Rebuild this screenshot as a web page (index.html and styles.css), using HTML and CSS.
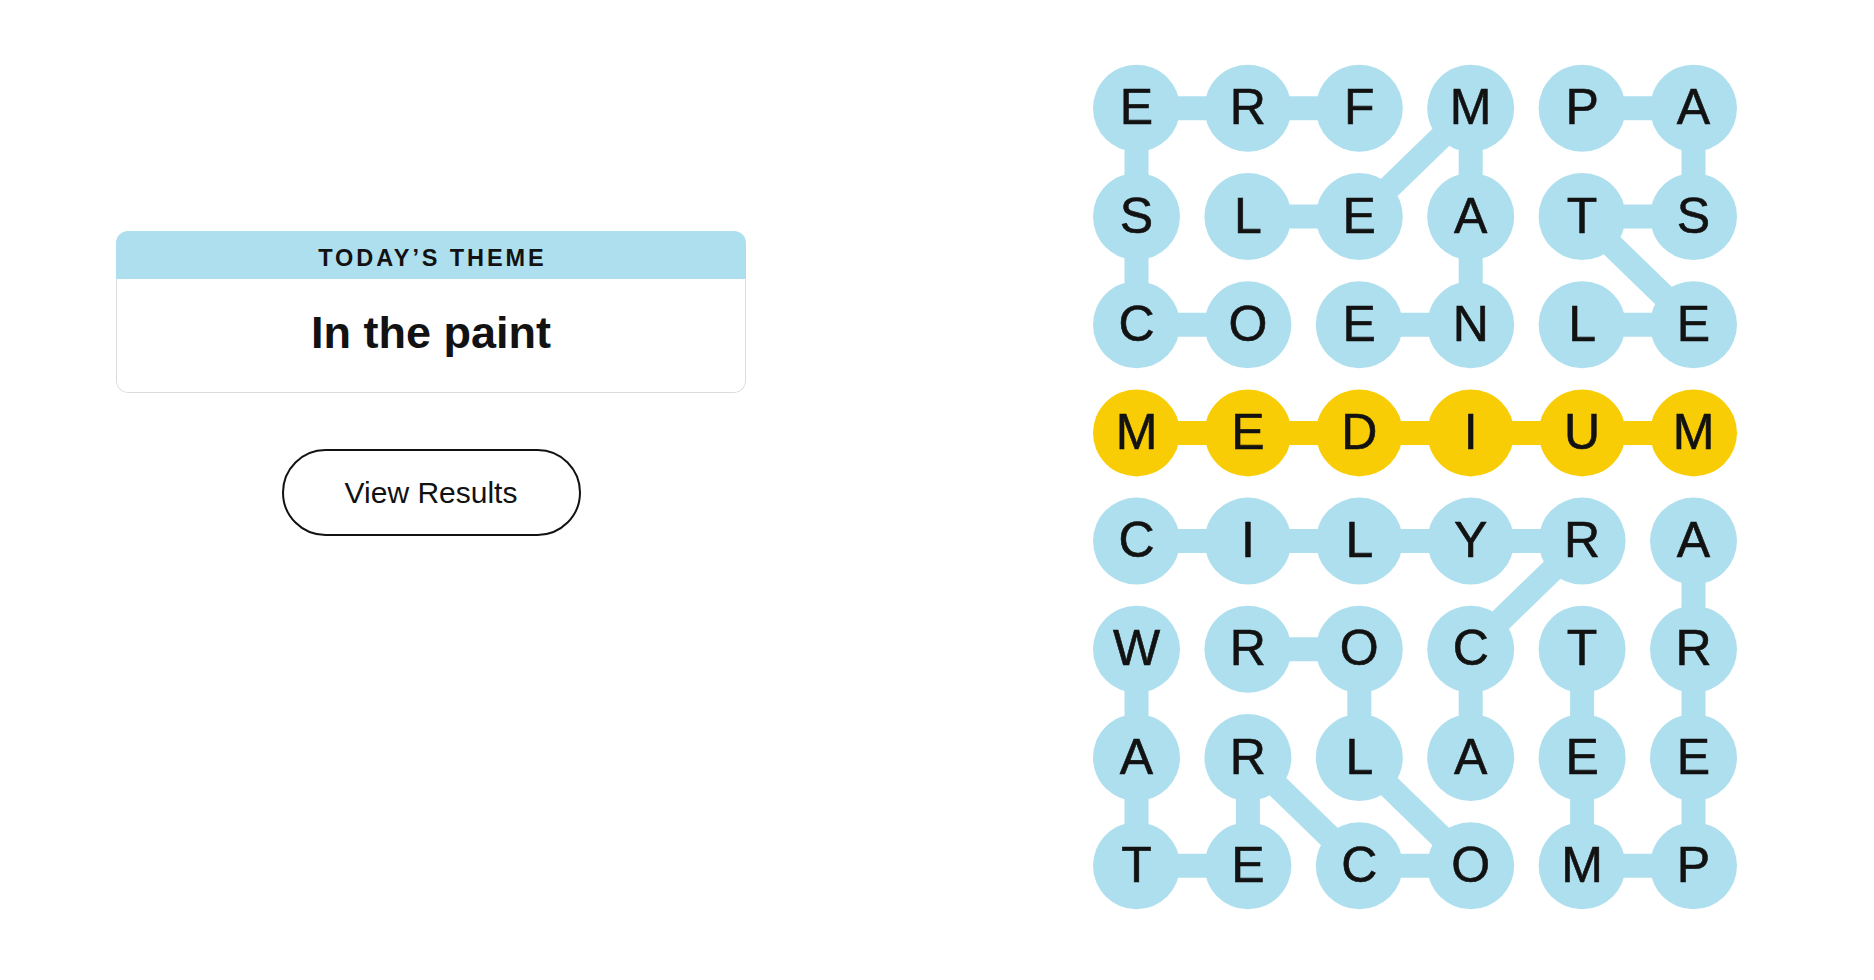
FILE: index.html
```html
<!DOCTYPE html>
<html lang="en">
<head>
<meta charset="utf-8">
<title>Strands</title>
<link rel="stylesheet" href="styles.css">
</head>
<body>
<main class="page">
  <section class="left">
    <div class="card">
      <div class="card-head">TODAY’S THEME</div>
      <div class="card-body"><h1 class="theme">In the paint</h1></div>
    </div>
    <button class="results">View Results</button>
  </section>
  <svg class="board" viewBox="0 0 654 852" width="654" height="852" xmlns="http://www.w3.org/2000/svg">
    <g class="links">
      <line x1="48.5" y1="48.3" x2="159.9" y2="48.3"/>
      <line x1="159.9" y1="48.3" x2="271.3" y2="48.3"/>
      <line x1="494.1" y1="48.3" x2="605.5" y2="48.3"/>
      <line x1="48.5" y1="48.3" x2="48.5" y2="156.5"/>
      <line x1="382.7" y1="48.3" x2="271.3" y2="156.5"/>
      <line x1="382.7" y1="48.3" x2="382.7" y2="156.5"/>
      <line x1="605.5" y1="48.3" x2="605.5" y2="156.5"/>
      <line x1="159.9" y1="156.5" x2="271.3" y2="156.5"/>
      <line x1="494.1" y1="156.5" x2="605.5" y2="156.5"/>
      <line x1="48.5" y1="156.5" x2="48.5" y2="264.7"/>
      <line x1="382.7" y1="156.5" x2="382.7" y2="264.7"/>
      <line x1="494.1" y1="156.5" x2="605.5" y2="264.7"/>
      <line x1="48.5" y1="264.7" x2="159.9" y2="264.7"/>
      <line x1="271.3" y1="264.7" x2="382.7" y2="264.7"/>
      <line x1="494.1" y1="264.7" x2="605.5" y2="264.7"/>
      <line x1="48.5" y1="481.1" x2="159.9" y2="481.1"/>
      <line x1="159.9" y1="481.1" x2="271.3" y2="481.1"/>
      <line x1="271.3" y1="481.1" x2="382.7" y2="481.1"/>
      <line x1="382.7" y1="481.1" x2="494.1" y2="481.1"/>
      <line x1="494.1" y1="481.1" x2="382.7" y2="589.3"/>
      <line x1="605.5" y1="481.1" x2="605.5" y2="589.3"/>
      <line x1="159.9" y1="589.3" x2="271.3" y2="589.3"/>
      <line x1="48.5" y1="589.3" x2="48.5" y2="697.5"/>
      <line x1="271.3" y1="589.3" x2="271.3" y2="697.5"/>
      <line x1="382.7" y1="589.3" x2="382.7" y2="697.5"/>
      <line x1="494.1" y1="589.3" x2="494.1" y2="697.5"/>
      <line x1="605.5" y1="589.3" x2="605.5" y2="697.5"/>
      <line x1="48.5" y1="697.5" x2="48.5" y2="805.7"/>
      <line x1="159.9" y1="697.5" x2="159.9" y2="805.7"/>
      <line x1="159.9" y1="697.5" x2="271.3" y2="805.7"/>
      <line x1="271.3" y1="697.5" x2="382.7" y2="805.7"/>
      <line x1="494.1" y1="697.5" x2="494.1" y2="805.7"/>
      <line x1="605.5" y1="697.5" x2="605.5" y2="805.7"/>
      <line x1="48.5" y1="805.7" x2="159.9" y2="805.7"/>
      <line x1="271.3" y1="805.7" x2="382.7" y2="805.7"/>
      <line x1="494.1" y1="805.7" x2="605.5" y2="805.7"/>
    </g>
    <g class="links gold">
      <line x1="48.5" y1="372.9" x2="605.5" y2="372.9"/>
    </g>
    <g class="dots">
      <circle cx="48.5" cy="48.3" r="43.5"/><circle cx="159.9" cy="48.3" r="43.5"/><circle cx="271.3" cy="48.3" r="43.5"/><circle cx="382.7" cy="48.3" r="43.5"/><circle cx="494.1" cy="48.3" r="43.5"/><circle cx="605.5" cy="48.3" r="43.5"/>
      <circle cx="48.5" cy="156.5" r="43.5"/><circle cx="159.9" cy="156.5" r="43.5"/><circle cx="271.3" cy="156.5" r="43.5"/><circle cx="382.7" cy="156.5" r="43.5"/><circle cx="494.1" cy="156.5" r="43.5"/><circle cx="605.5" cy="156.5" r="43.5"/>
      <circle cx="48.5" cy="264.7" r="43.5"/><circle cx="159.9" cy="264.7" r="43.5"/><circle cx="271.3" cy="264.7" r="43.5"/><circle cx="382.7" cy="264.7" r="43.5"/><circle cx="494.1" cy="264.7" r="43.5"/><circle cx="605.5" cy="264.7" r="43.5"/>
      <circle cx="48.5" cy="481.1" r="43.5"/><circle cx="159.9" cy="481.1" r="43.5"/><circle cx="271.3" cy="481.1" r="43.5"/><circle cx="382.7" cy="481.1" r="43.5"/><circle cx="494.1" cy="481.1" r="43.5"/><circle cx="605.5" cy="481.1" r="43.5"/>
      <circle cx="48.5" cy="589.3" r="43.5"/><circle cx="159.9" cy="589.3" r="43.5"/><circle cx="271.3" cy="589.3" r="43.5"/><circle cx="382.7" cy="589.3" r="43.5"/><circle cx="494.1" cy="589.3" r="43.5"/><circle cx="605.5" cy="589.3" r="43.5"/>
      <circle cx="48.5" cy="697.5" r="43.5"/><circle cx="159.9" cy="697.5" r="43.5"/><circle cx="271.3" cy="697.5" r="43.5"/><circle cx="382.7" cy="697.5" r="43.5"/><circle cx="494.1" cy="697.5" r="43.5"/><circle cx="605.5" cy="697.5" r="43.5"/>
      <circle cx="48.5" cy="805.7" r="43.5"/><circle cx="159.9" cy="805.7" r="43.5"/><circle cx="271.3" cy="805.7" r="43.5"/><circle cx="382.7" cy="805.7" r="43.5"/><circle cx="494.1" cy="805.7" r="43.5"/><circle cx="605.5" cy="805.7" r="43.5"/>
    </g>
    <g class="dots gold">
      <circle cx="48.5" cy="372.9" r="43.5"/><circle cx="159.9" cy="372.9" r="43.5"/><circle cx="271.3" cy="372.9" r="43.5"/><circle cx="382.7" cy="372.9" r="43.5"/><circle cx="494.1" cy="372.9" r="43.5"/><circle cx="605.5" cy="372.9" r="43.5"/>
    </g>
    <g class="letters">
      <text x="48.5" y="64.3">E</text><text x="159.9" y="64.3">R</text><text x="271.3" y="64.3">F</text><text x="382.7" y="64.3">M</text><text x="494.1" y="64.3">P</text><text x="605.5" y="64.3">A</text>
      <text x="48.5" y="172.5">S</text><text x="159.9" y="172.5">L</text><text x="271.3" y="172.5">E</text><text x="382.7" y="172.5">A</text><text x="494.1" y="172.5">T</text><text x="605.5" y="172.5">S</text>
      <text x="48.5" y="280.7">C</text><text x="159.9" y="280.7">O</text><text x="271.3" y="280.7">E</text><text x="382.7" y="280.7">N</text><text x="494.1" y="280.7">L</text><text x="605.5" y="280.7">E</text>
      <text x="48.5" y="388.9">M</text><text x="159.9" y="388.9">E</text><text x="271.3" y="388.9">D</text><text x="382.7" y="388.9">I</text><text x="494.1" y="388.9">U</text><text x="605.5" y="388.9">M</text>
      <text x="48.5" y="497.1">C</text><text x="159.9" y="497.1">I</text><text x="271.3" y="497.1">L</text><text x="382.7" y="497.1">Y</text><text x="494.1" y="497.1">R</text><text x="605.5" y="497.1">A</text>
      <text x="48.5" y="605.3">W</text><text x="159.9" y="605.3">R</text><text x="271.3" y="605.3">O</text><text x="382.7" y="605.3">C</text><text x="494.1" y="605.3">T</text><text x="605.5" y="605.3">R</text>
      <text x="48.5" y="713.5">A</text><text x="159.9" y="713.5">R</text><text x="271.3" y="713.5">L</text><text x="382.7" y="713.5">A</text><text x="494.1" y="713.5">E</text><text x="605.5" y="713.5">E</text>
      <text x="48.5" y="821.7">T</text><text x="159.9" y="821.7">E</text><text x="271.3" y="821.7">C</text><text x="382.7" y="821.7">O</text><text x="494.1" y="821.7">M</text><text x="605.5" y="821.7">P</text>
    </g>
  </svg>
</main>
</body>
</html>
```

FILE: styles.css
```css
* { box-sizing: border-box; }

html, body {
  margin: 0;
  background: #ffffff;
  color: #121212;
  font-family: "Liberation Sans", Arial, sans-serif;
}

.page {
  display: flex;
  align-items: flex-start;
  gap: 342px;
  padding-left: 116px;
}

.left {
  width: 630px;
  padding-top: 231px;
  display: flex;
  flex-direction: column;
  align-items: center;
}

.card {
  width: 100%;
  border-radius: 12px;
  overflow: hidden;
}

.card-head {
  height: 48px;
  background: #aedfee;
  padding-top: 15px;
  font-size: 23.5px;
  line-height: 24px;
  font-weight: 700;
  letter-spacing: 2.9px;
  text-indent: 2.9px;
  text-align: center;
}

.card-body {
  height: 114px;
  border: 1px solid #dcdcdc;
  border-top: none;
  border-radius: 0 0 12px 12px;
  padding-top: 30.5px;
  text-align: center;
}

.theme {
  margin: 0;
  font-size: 45px;
  line-height: 45px;
  font-weight: 700;
}

.results {
  margin-top: 56px;
  width: 299px;
  height: 87px;
  border: 2px solid #121212;
  border-radius: 44px;
  background: #ffffff;
  color: #121212;
  font-family: "Liberation Sans", Arial, sans-serif;
  font-size: 30px;
  padding: 0;
}

.board {
  display: block;
  margin-top: 60px;
  flex: none;
}

.links line {
  stroke: #aedfee;
  stroke-width: 24;
}

.links.gold line {
  stroke: #f8cd05;
}

.dots circle {
  fill: #aedfee;
}

.dots.gold circle {
  fill: #f8cd05;
}

.letters text {
  font-family: "Liberation Sans", Arial, sans-serif;
  font-size: 50px;
  fill: #121212;
  stroke: #121212;
  stroke-width: 0.6;
  text-anchor: middle;
}
```
